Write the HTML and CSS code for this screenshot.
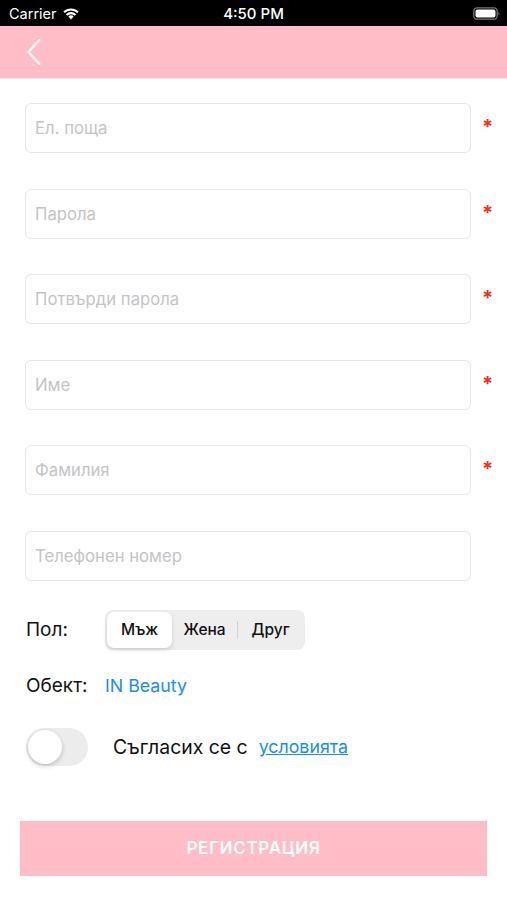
FILE: index.html
```html
<!DOCTYPE html>
<html>
<head>
<meta charset="utf-8">
<link rel="stylesheet" href="styles.css">
</head>
<body>
<div class="status">
  <div class="st-left">Carrier
    <svg class="wifi" width="18" height="13" viewBox="0 0 18 13"><path d="M9 12.5 L6.3 9.6 A3.8 3.8 0 0 1 11.7 9.6 Z" fill="#fff"/><path d="M3.9 7.2 A7.2 7.2 0 0 1 14.1 7.2 L12.7 8.7 A5.2 5.2 0 0 0 5.3 8.7 Z" fill="#fff"/><path d="M1.4 4.6 A10.8 10.8 0 0 1 16.6 4.6 L15.2 6.1 A8.8 8.8 0 0 0 2.8 6.1 Z" fill="#fff"/></svg>
  </div>
  <div class="st-time">4:50 PM</div>
  <div class="st-right">
    <svg width="28" height="13" viewBox="0 0 28 13"><rect x="0.8" y="0.8" width="23.4" height="11.4" rx="3.5" fill="none" stroke="#777" stroke-width="1.3"/><rect x="2.5" y="2.5" width="20" height="8" rx="2" fill="#fff"/><path d="M25.5 4.5 Q27.3 6.5 25.5 8.5 Z" fill="#777"/></svg>
  </div>
</div>
<div class="nav">
  <svg class="back" width="14" height="26" viewBox="0 0 14 26"><path d="M12.5 1 L1.5 13 L12.5 25" fill="none" stroke="#fff" stroke-width="2" stroke-linecap="round" stroke-linejoin="round"/></svg>
</div>
<main class="form">
  <div class="row"><div class="field">Ел. поща</div><span class="req">*</span></div>
  <div class="row"><div class="field">Парола</div><span class="req">*</span></div>
  <div class="row"><div class="field">Потвърди парола</div><span class="req">*</span></div>
  <div class="row"><div class="field">Име</div><span class="req">*</span></div>
  <div class="row"><div class="field">Фамилия</div><span class="req">*</span></div>
  <div class="row"><div class="field">Телефонен номер</div><span class="req"></span></div>
  <div class="line gender">
    <span class="label">Пол:</span>
    <div class="seg">
      <span class="seg-item active">Мъж</span>
      <span class="seg-item">Жена</span>
      <span class="seg-div"></span>
      <span class="seg-item">Друг</span>
    </div>
  </div>
  <div class="line obj">
    <span class="label">Обект:</span>
    <span class="blue">IN Beauty</span>
  </div>
  <div class="line agree">
    <span class="toggle"><span class="knob"></span></span>
    <span class="agree-text">Съгласих се с</span>
    <a class="link">условията</a>
  </div>
</main>
<div class="btn">РЕГИСТРАЦИЯ</div>
</body>
</html>
```
FILE: styles.css
```css
* { box-sizing: border-box; }
body {
  margin: 0;
  width: 507px;
  height: 900px;
  background: #fff;
  font-family: Inter, "Liberation Sans", sans-serif;
  overflow: hidden;
}
.status {
  height: 26px;
  background: #000;
  color: #fff;
  display: flex;
  align-items: center;
  justify-content: space-between;
  padding: 0 6px 0 9px;
  font-size: 14.5px;
  position: relative;
}
.st-left { display: flex; align-items: center; gap: 5px; }
.st-time {
  position: absolute;
  left: 0; right: 0;
  text-align: center;
  font-weight: 500;
  font-size: 15px;
}
.st-right { display: flex; align-items: center; }
.nav {
  height: 53px;
  background: #ffbdc7;
  display: flex;
  align-items: center;
  padding-left: 27px;
  border-bottom: 1px solid #f4e4e6;
}
.form {
  padding: 24px 0 0 25px;
  display: flex;
  flex-direction: column;
}
.row {
  display: flex;
  align-items: center;
  height: 50px;
  margin-bottom: 35.6px;
}
.field {
  width: 446px;
  height: 50px;
  border: 1px solid #e6e6e6;
  border-radius: 6px;
  display: flex;
  align-items: center;
  padding-left: 9px;
  color: #c4c4c6;
  font-size: 16.7px;
}
.req {
  color: #f2311a;
  font-size: 20px;
  font-weight: 700;
  margin-left: 11px;
  margin-top: -2px;
}
.line {
  display: flex;
  align-items: center;
  font-size: 19px;
  color: #111;
}
.gender { margin-top: -7px; height: 40px; }
.gender .label { width: 80px; padding-left: 1px; }
.seg {
  display: flex;
  align-items: center;
  background: #eeeeef;
  border-radius: 8px;
  padding: 2px;
  height: 40px;
  width: 200px;
}
.seg-item {
  font-size: 15.5px;
  font-weight: 500;
  height: 36px;
  display: flex;
  align-items: center;
  justify-content: center;
  flex: 1;
}
.seg-item.active {
  background: #fff;
  border-radius: 7px;
  box-shadow: 0 2px 4px rgba(0,0,0,0.15);
}
.seg-div { width: 1px; height: 18px; background: #d0d0d2; }
.obj { margin-top: 16px; height: 40px; }
.obj .label { width: 80px; padding-left: 1px; }
.blue { color: #1a8cf0; font-size: 17.8px; }
.agree { margin-top: 22px; height: 38px; }
.toggle {
  width: 62px;
  height: 38px;
  background: #ececed;
  border-radius: 19px;
  padding: 2px;
  display: flex;
  align-items: center;
  margin-left: 1px;
}
.knob {
  width: 34px; height: 34px;
  border-radius: 50%;
  background: #fff;
  box-shadow: 0 2px 5px rgba(0,0,0,0.2);
}
.agree-text { margin-left: 25px; font-size: 19.4px; }
.link {
  margin-left: 11px;
  color: #1a8cf0;
  text-decoration: underline;
  font-size: 17.8px;
}
.btn {
  margin: 55px 20px 0 20px;
  height: 55px;
  background: #ffbdc7;
  color: #fff;
  display: flex;
  align-items: center;
  justify-content: center;
  font-size: 17px;
  font-weight: 600;
  letter-spacing: 0.7px;
}
```
